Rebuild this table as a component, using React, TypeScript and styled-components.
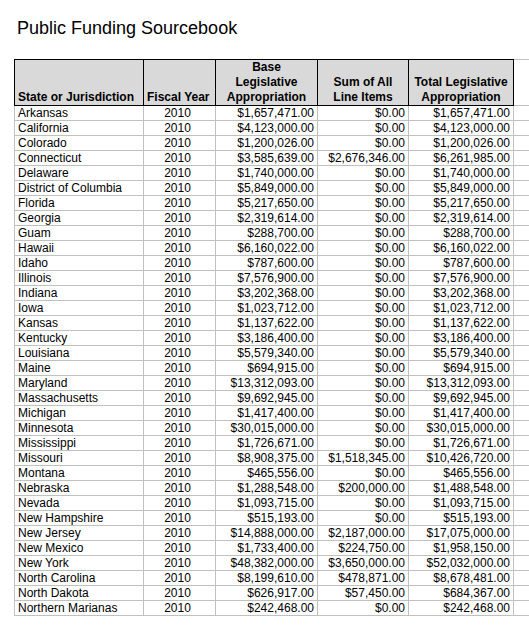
import React from "react";
import styled, { createGlobalStyle } from "styled-components";

interface Row {
  state: string;
  base: number;
  lineItems: number;
}

const rows: Row[] = [
  { state: "Arkansas", base: 1657471, lineItems: 0 },
  { state: "California", base: 4123000, lineItems: 0 },
  { state: "Colorado", base: 1200026, lineItems: 0 },
  { state: "Connecticut", base: 3585639, lineItems: 2676346 },
  { state: "Delaware", base: 1740000, lineItems: 0 },
  { state: "District of Columbia", base: 5849000, lineItems: 0 },
  { state: "Florida", base: 5217650, lineItems: 0 },
  { state: "Georgia", base: 2319614, lineItems: 0 },
  { state: "Guam", base: 288700, lineItems: 0 },
  { state: "Hawaii", base: 6160022, lineItems: 0 },
  { state: "Idaho", base: 787600, lineItems: 0 },
  { state: "Illinois", base: 7576900, lineItems: 0 },
  { state: "Indiana", base: 3202368, lineItems: 0 },
  { state: "Iowa", base: 1023712, lineItems: 0 },
  { state: "Kansas", base: 1137622, lineItems: 0 },
  { state: "Kentucky", base: 3186400, lineItems: 0 },
  { state: "Louisiana", base: 5579340, lineItems: 0 },
  { state: "Maine", base: 694915, lineItems: 0 },
  { state: "Maryland", base: 13312093, lineItems: 0 },
  { state: "Massachusetts", base: 9692945, lineItems: 0 },
  { state: "Michigan", base: 1417400, lineItems: 0 },
  { state: "Minnesota", base: 30015000, lineItems: 0 },
  { state: "Mississippi", base: 1726671, lineItems: 0 },
  { state: "Missouri", base: 8908375, lineItems: 1518345 },
  { state: "Montana", base: 465556, lineItems: 0 },
  { state: "Nebraska", base: 1288548, lineItems: 200000 },
  { state: "Nevada", base: 1093715, lineItems: 0 },
  { state: "New Hampshire", base: 515193, lineItems: 0 },
  { state: "New Jersey", base: 14888000, lineItems: 2187000 },
  { state: "New Mexico", base: 1733400, lineItems: 224750 },
  { state: "New York", base: 48382000, lineItems: 3650000 },
  { state: "North Carolina", base: 8199610, lineItems: 478871 },
  { state: "North Dakota", base: 626917, lineItems: 57450 },
  { state: "Northern Marianas", base: 242468, lineItems: 0 },
];

const money = new Intl.NumberFormat("en-US", {
  minimumFractionDigits: 2,
  maximumFractionDigits: 2,
});
const fmt = (n: number) => "$" + money.format(n);

const GlobalStyle = createGlobalStyle`
  html, body {
    margin: 0;
    background: #ffffff;
  }
  body {
    font-family: "Liberation Sans", Arial, sans-serif;
    color: #000000;
  }
`;

const Sheet = styled.main`
  padding-top: 18px;
  overflow: hidden;
`;

const Title = styled.h1`
  margin: 0 0 20px 17px;
  font-size: 18px;
  line-height: 21px;
  font-weight: 400;
`;

const Table = styled.table`
  margin-left: 14px;
  border-collapse: collapse;
  table-layout: fixed;
  width: 531px;
  font-size: 12px;
`;

const HeadCell = styled.th<{ $align?: "left" | "center" }>`
  background: #d9d9d9;
  border: 1px solid #000000;
  padding: 0 3px;
  line-height: 15px;
  height: 45px;
  font-weight: 700;
  vertical-align: bottom;
  text-align: ${(p) => p.$align ?? "center"};
  white-space: nowrap;
`;

const GridHead = styled.th`
  border-top: 1px solid #c0c0c0;
  border-bottom: 1px solid #c0c0c0;
  padding: 0;
`;

const Cell = styled.td<{ $align: "left" | "center" | "right" }>`
  border: 1px solid #c0c0c0;
  padding: ${(p) => (p.$align === "center" ? "0 5px 0 1px" : "0 3px")};
  line-height: 14px;
  height: 14px;
  text-align: ${(p) => p.$align};
  white-space: nowrap;
  overflow: hidden;
`;

const GridCell = styled.td`
  border-bottom: 1px solid #c0c0c0;
  padding: 0;
`;

export default function App() {
  return (
    <Sheet>
      <GlobalStyle />
      <Title>Public Funding Sourcebook</Title>
      <Table>
        <colgroup>
          <col style={{ width: 129 }} />
          <col style={{ width: 72 }} />
          <col style={{ width: 102 }} />
          <col style={{ width: 91 }} />
          <col style={{ width: 105 }} />
          <col style={{ width: 32 }} />
        </colgroup>
        <thead>
          <tr>
            <HeadCell $align="left">State or Jurisdiction</HeadCell>
            <HeadCell $align="left">Fiscal Year</HeadCell>
            <HeadCell>
              Base
              <br />
              Legislative
              <br />
              Appropriation
            </HeadCell>
            <HeadCell>
              Sum of All
              <br />
              Line Items
            </HeadCell>
            <HeadCell>
              Total Legislative
              <br />
              Appropriation
            </HeadCell>
            <GridHead />
          </tr>
        </thead>
        <tbody>
          {rows.map((r) => (
            <tr key={r.state}>
              <Cell $align="left">{r.state}</Cell>
              <Cell $align="center">2010</Cell>
              <Cell $align="right">{fmt(r.base)}</Cell>
              <Cell $align="right">{fmt(r.lineItems)}</Cell>
              <Cell $align="right">{fmt(r.base + r.lineItems)}</Cell>
              <GridCell />
            </tr>
          ))}
        </tbody>
      </Table>
    </Sheet>
  );
}
